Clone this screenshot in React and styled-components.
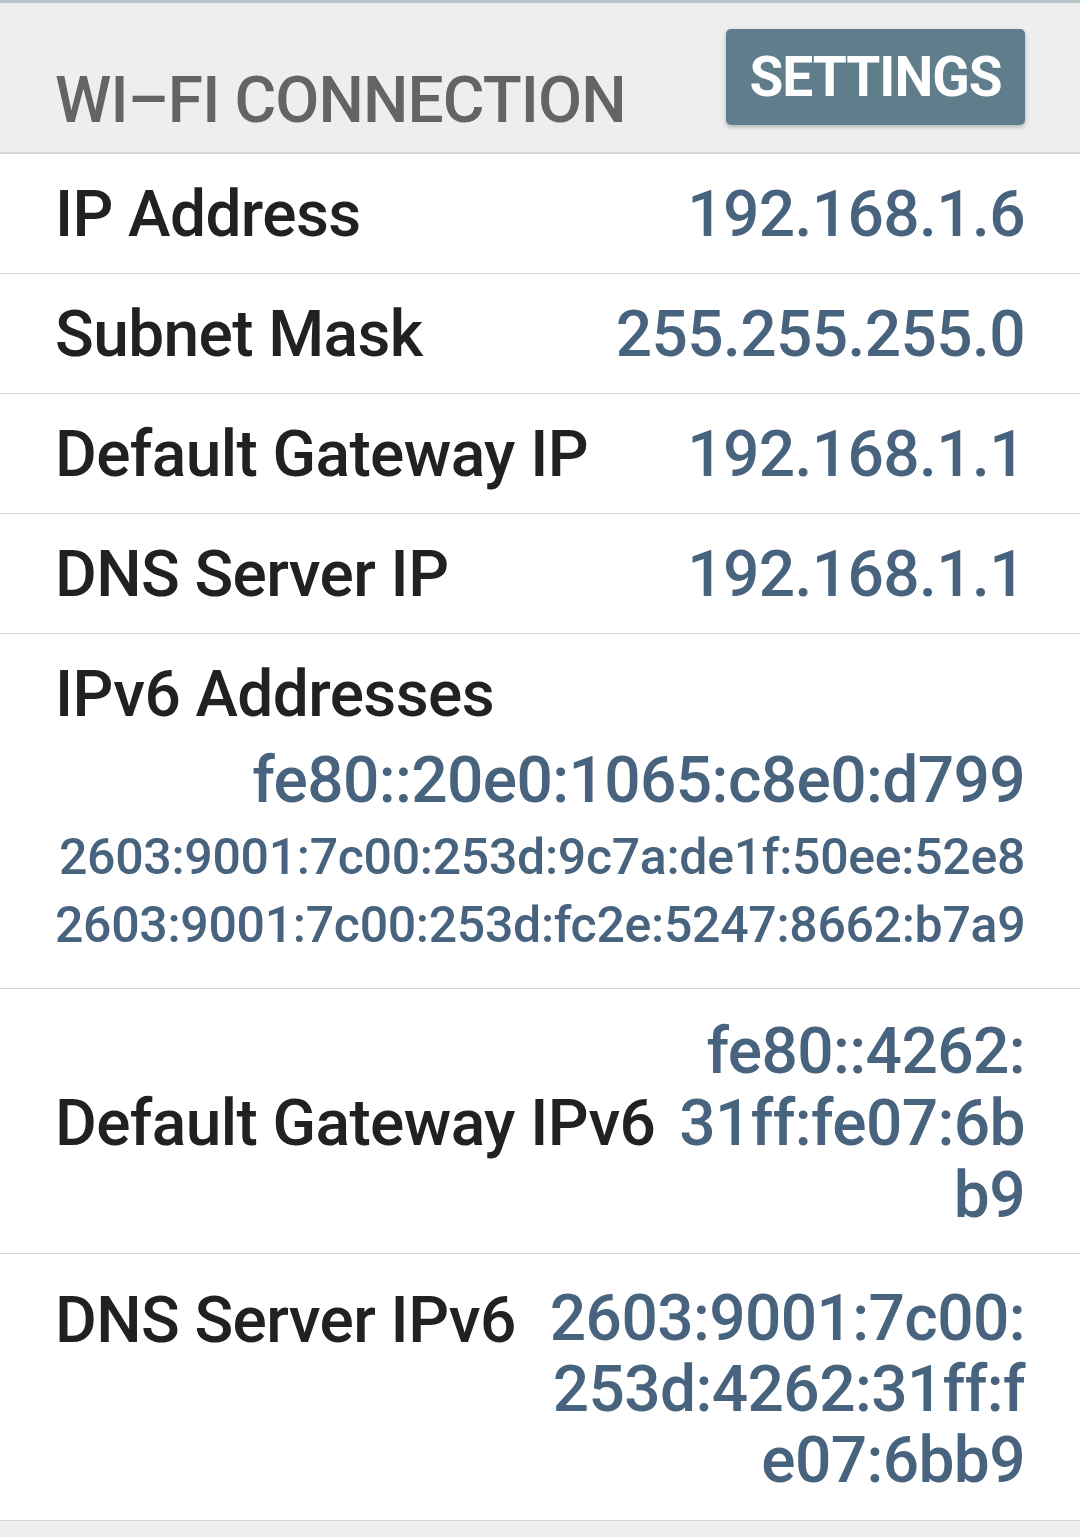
import React from "react";
import styled, { createGlobalStyle } from "styled-components";

const Global = createGlobalStyle`
  html, body { margin: 0; padding: 0; background: #eeeeee; }
  body { font-family: Roboto, "Noto Sans", "Liberation Sans", sans-serif; }
  * { box-sizing: border-box; }
`;

const Page = styled.div`
  width: 1080px;
  min-height: 1537px;
  background: #eeeeee;
`;

const Header = styled.header`
  height: 154px;
  padding: 29px 55px 0 55px;
  display: flex;
  justify-content: space-between;
  align-items: flex-start;
  background: #eeeeee;
  border-top: 3px solid #b9c5cd;
  border-bottom: 2px solid #d6d6d6;
`;

const Title = styled.h1`
  margin: 31px 0 0 0;
  font-size: 64px;
  line-height: 76px;
  font-weight: 500;
  color: #646464;
  letter-spacing: -0.9px;
`;

const SettingsButton = styled.button`
  width: 299px;
  height: 96px;
  margin-top: -3px;
  border: none;
  border-radius: 5px;
  background: #607d8b;
  color: #ffffff;
  font-family: Roboto, "Noto Sans", sans-serif;
  font-weight: 700;
  font-size: 55px;
  letter-spacing: -1px;
  box-shadow: 0 2px 4px rgba(0, 0, 0, 0.25);
  display: flex;
  align-items: center;
  justify-content: center;
  padding: 0;
`;

const List = styled.div`
  background: #ffffff;
`;

const Row = styled.div`
  display: flex;
  justify-content: space-between;
  align-items: ${(p) => p.$align || "center"};
  gap: 20px;
  min-height: 120px;
  padding: ${(p) => p.$pad || "2px"} 55px ${(p) => p.$padBottom || "0"} 55px;
  border-bottom: 1px solid #d4d4d4;
`;

const Label = styled.div`
  flex-shrink: 0;
  font-size: 64px;
  line-height: 76px;
  font-weight: 500;
  letter-spacing: -0.6px;
  color: #212121;
`;

const Value = styled.div`
  flex-shrink: 0;
  font-size: 64px;
  line-height: ${(p) => p.$lh || 76}px;
  font-weight: 500;
  letter-spacing: -0.6px;
  color: #47637d;
  text-align: right;
`;

const Line = styled.div`
  white-space: nowrap;
`;

const Column = styled.div`
  padding: 23px 55px 29px 55px;
  border-bottom: 1px solid #d4d4d4;
  display: flex;
  flex-direction: column;
`;

const Primary = styled.div`
  margin-top: 10px;
  font-size: 64px;
  line-height: 76px;
  font-weight: 500;
  letter-spacing: -0.6px;
  color: #47637d;
  text-align: right;
`;

const Secondary = styled.div`
  margin-top: ${(p) => (p.$first ? "4px" : "0")};
  font-size: 50px;
  line-height: 68px;
  font-weight: 500;
  letter-spacing: -0.3px;
  color: #47637d;
  text-align: right;
  white-space: nowrap;
`;

const Footer = styled.div`
  height: 17px;
  background: #eeeeee;
`;

const simple = [
  ["IP Address", "192.168.1.6"],
  ["Subnet Mask", "255.255.255.0"],
  ["Default Gateway IP", "192.168.1.1"],
  ["DNS Server IP", "192.168.1.1"],
];

export default function App() {
  return (
    <Page>
      <Global />
      <Header>
        <Title>WI–FI CONNECTION</Title>
        <SettingsButton>SETTINGS</SettingsButton>
      </Header>
      <List>
        {simple.map(([k, v]) => (
          <Row key={k}>
            <Label>{k}</Label>
            <Value>{v}</Value>
          </Row>
        ))}
        <Column>
          <Label>IPv6 Addresses</Label>
          <Primary>fe80::20e0:1065:c8e0:d799</Primary>
          <Secondary $first>2603:9001:7c00:253d:9c7a:de1f:50ee:52e8</Secondary>
          <Secondary>2603:9001:7c00:253d:fc2e:5247:8662:b7a9</Secondary>
        </Column>
        <Row $pad="27px" $padBottom="21px">
          <Label>Default Gateway IPv6</Label>
          <Value $lh={72}>
            {["fe80::4262:", "31ff:fe07:6b", "b9"].map((l) => (
              <Line key={l}>{l}</Line>
            ))}
          </Value>
        </Row>
        <Row $align="flex-start" $pad="29px" $padBottom="24px">
          <Label>DNS Server IPv6</Label>
          <Value $lh={71}>
            {["2603:9001:7c00:", "253d:4262:31ff:f", "e07:6bb9"].map((l) => (
              <Line key={l}>{l}</Line>
            ))}
          </Value>
        </Row>
      </List>
      <Footer />
    </Page>
  );
}
